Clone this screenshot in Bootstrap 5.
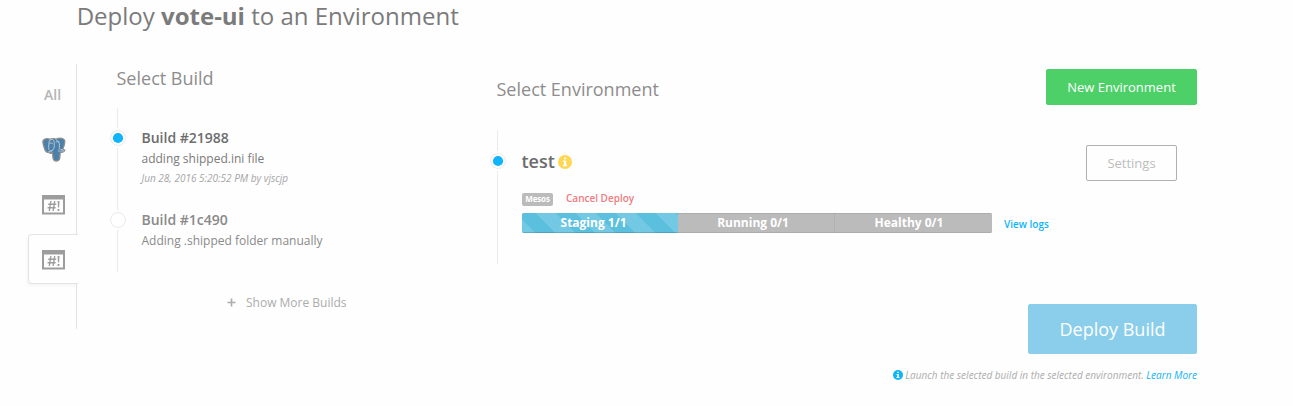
<!DOCTYPE html>
<html lang="en">
<head>
<meta charset="utf-8">
<meta name="viewport" content="width=device-width, initial-scale=1">
<title>Deploy vote-ui</title>
<link href="https://cdn.jsdelivr.net/npm/bootstrap@5.3.0/dist/css/bootstrap.min.css" rel="stylesheet">
<style>
body{font-family:"Open Sans",sans-serif;background:#fefefe;color:#7b7b7b;font-size:12px;line-height:20px;overflow:hidden}
.page{width:1197px;padding-left:28px}
h1{font-size:24px;line-height:32px;margin:0 0 32px 48.7px;color:#7b7b7b;font-weight:400}
h2{font-size:18px;line-height:24px;margin:0 0 0 -.5px;color:#8d8d8d;font-weight:400}
.services{width:49px;height:265px;background:linear-gradient(#e4e4e4,#e4e4e4) right/1px 100% no-repeat}
.service{width:50px;height:55px;padding-left:14px}
.service.all{height:60px;padding:2px 0 0 16px;font-size:14px;font-weight:600;color:#b5b5b5}
.service.current{height:50px;background:#fefefe;border:1px solid #e4e4e4;border-right:0;border-radius:4px 0 0 4px;padding:1px 0 0 13px;box-shadow:-1px 2px 3px rgba(0,0,0,.04)}
.builds{width:380px;margin-left:40px;padding-top:2px}
.envs{width:700px;padding-top:5px}
.timeline{background:linear-gradient(#ebebeb,#ebebeb) 0 0/1px 100% no-repeat}
.stop{padding-left:7px}
.stop-dot{flex:none;width:16px;height:20px;margin-left:-14px;margin-right:15.5px;background:#fefefe}
.stop-dot svg{display:block;margin-top:2px}
.name{font-size:14px;line-height:20px;font-weight:600;color:#6c6c6c}
.note{line-height:22px}
.when{font-size:10px;line-height:16px;font-style:italic;color:#a5a5a5}
.pending,.pending .name{color:#8a8a8a}
.more{margin:21px 0 0 110px;color:#acacac}
.btn{font-size:13px;line-height:20px;border-radius:2px;padding:7px 20px}
.btn-new{background:#4cd067;border-color:#4cd067;color:#fff;width:151px;height:36px;padding-left:0;padding-right:0;font-weight:500}
.btn-settings{border-color:#b0b0b0;color:#bdbdbd;width:91px;height:36px;margin-right:20px;padding-left:0;padding-right:0}
.btn-deploy{background:#8bceec;border-color:#8bceec;color:#fff;width:169px;height:50px;font-size:18px;padding:0}
.env-name{font-size:18px;line-height:24px;font-weight:600;color:#6c6c6c}
.tag{width:31px;height:13px;background:#bbb;color:#fff;font-size:8px;line-height:12px;font-weight:700;border-radius:2px;text-align:center;letter-spacing:-.15px}
.cancel{font-size:10px;line-height:14px;font-weight:600;color:#ee7b7f;margin:-2px 0 0 13px}
.progress{width:470px;height:20px;border-radius:2px;background:#bbb;--bs-progress-font-size:12px}
.progress-bar{font-weight:700;background-color:#bbb;box-shadow:inset 0 -1px 0 rgba(0,0,0,.08),inset 0 1px 0 rgba(0,0,0,.07);padding-right:9px}
.progress-bar.running{padding-right:7px;box-shadow:inset 0 -1px 0 rgba(0,0,0,.08),inset 0 1px 0 rgba(0,0,0,.07),inset -1px 0 0 rgba(0,0,0,.05)}
.progress-bar.staging{padding-right:13px;background-color:#5bc0de;background-size:40px 40px;background-position:14px 0;box-shadow:inset 0 -1px 0 rgba(0,0,0,.15)}
.blue{color:#0fb4fa;text-decoration:none}
.logs{font-size:10px;font-weight:600;line-height:14px}
.hint{font-size:10px;line-height:14px;font-style:italic;color:#acacac;margin-top:14px}
</style>
</head>
<body>
<svg width="0" height="0" class="d-none">
  <symbol id="window" viewBox="0 0 23 20"><path fill="#9d9d9d" fill-rule="evenodd" d="M0 0h23v19.500H0zM2 4.500v13h19v-13z"/><path d="M8.900 6 7.300 16M12.700 6 11.100 16M6.200 9.300h8M5.600 12.700h8" fill="none" stroke="#9d9d9d" stroke-width="1.400"/><path d="M15.600 5.900h1.900l-.4 6.500H16zM15.600 13.900h1.800v2h-1.800z" fill="#9d9d9d"/></symbol>
  <symbol id="info" viewBox="0 0 14 14"><circle cx="7" cy="7" r="7" fill="currentColor"/><path fill="#fff" d="M6 2.400h2.200v1.900H6zM5 5.600h3.200v4.200h.9v1.400H4.900V9.800H6V7H5z"/></symbol>
  <symbol id="dot" viewBox="0 0 16 16"><circle cx="8" cy="8" r="7.400" fill="#fff" stroke="#e9e9e9"/><circle cx="8" cy="8" r="5.100" fill="#0fb4fa"/></symbol>
</svg>
<main class="page">
  <h1>Deploy <strong>vote-ui</strong> to an Environment</h1>
  <div class="d-flex">
    <nav class="services">
      <div class="service all d-flex align-items-center">All</div>
      <div class="service d-flex align-items-center">
        <svg width="24" height="25" viewBox="0 0 24 25" style="margin-top:-5px">
          <path d="M1.200 3.400C2.800 1.300 6 1.400 8.200 2.200 10 1.500 12 1.400 13.800 2c2.600-.9 6.800-1.200 8.500.8 1.300 1.900-.3 6.500-1.600 9.600l2.100.7c-.5 1.500-2.500 2.500-4.600 2.300l-.4 5.400c-.2 2.300-1.700 3.200-3.300 3.200-1.800 0-3.300-1.200-3.500-3.300l-.4-4.900c-1.500.9-3.300.3-4-.4-2.100.4-3.700-2.100-4.400-4.900C1.400 7.800.3 5.100 1.200 3.400z" fill="#4a80aa" stroke="#8f8d8b" stroke-width="1.300"/>
          <path d="M8.200 2.500C6 5.600 7 10.300 6.800 12.700M8.200 3c2.800-1.500 4.400.8 4.100 3.500-.2 3.300.3 4.800-1.800 6.700-.8 1.500-2.500 2.100-4.100 1.500M13.700 2.500c2.500 1 4 3.700 3.700 6.500-.1 2.100-.2 2.600 1.100 3.600h2.200M17.300 5c-.9-.7-2.200-.5-3.500.2M7.600 6.500c1.200-.7 2.300-.5 3.300 0M17 12.500v2.300M7 14l3.500-.4M18.500 14.300l3.500-.6" fill="none" stroke="#b9cad8" stroke-width="1"/>
        </svg>
      </div>
      <div class="service d-flex align-items-center"><svg width="23" height="20" style="margin-bottom:3px"><use href="#window"/></svg></div>
      <div class="service current d-flex align-items-center"><svg width="23" height="20"><use href="#window"/></svg></div>
    </nav>
    <section class="builds">
      <h2>Select Build</h2>
      <div class="timeline" style="margin-top:18px;padding:20px 0">
        <div class="stop d-flex" style="height:82px">
          <div class="stop-dot"><svg width="16" height="16"><use href="#dot"/></svg></div>
          <div><div class="name">Build #21988</div><div class="note">adding shipped.ini file</div><div class="when">Jun 28, 2016 5:20:52 PM by vjscjp</div></div>
        </div>
        <div class="stop d-flex pending">
          <div class="stop-dot"><svg width="16" height="16"><circle cx="8" cy="8" r="7.400" fill="#fff" stroke="#e9e9e9"/></svg></div>
          <div><div class="name">Build #1c490</div><div class="note">Adding .shipped folder manually</div></div>
        </div>
      </div>
      <div class="more d-flex align-items-center"><svg width="9" height="9" style="margin:-2px 10px 0 0"><path d="M4.500.5v8M.5 4.500h8" stroke="#acacac" stroke-width="1.600"/></svg><span>Show More Builds</span></div>
    </section>
    <section class="envs">
      <div class="d-flex justify-content-between">
        <h2 class="pt-2">Select Environment</h2>
        <button class="btn btn-new">New Environment</button>
      </div>
      <div class="timeline" style="margin-top:25px;height:134px;padding-top:15px">
        <div class="stop d-flex align-items-start">
          <div class="stop-dot" style="margin-top:6px"><svg width="16" height="16"><use href="#dot"/></svg></div>
          <div class="env-name flex-grow-1 d-flex align-items-center" style="margin-top:4px">test<svg width="14" height="14" style="color:#ffd753;margin:1px 0 0 3.500px"><use href="#info"/></svg></div>
          <button class="btn btn-settings">Settings</button>
        </div>
        <div style="padding:11px 0 0 25px">
          <div class="d-flex align-items-center" style="height:14px"><span class="tag">Mesos</span><span class="cancel">Cancel Deploy</span></div>
          <div class="d-flex" style="margin-top:7px">
            <div class="progress">
              <div class="progress-bar staging progress-bar-striped" style="width:33.200%">Staging 1/1</div>
              <div class="progress-bar running" style="width:33.400%">Running 0/1</div>
              <div class="progress-bar" style="width:33.400%">Healthy 0/1</div>
            </div>
            <a href="#" class="blue logs" style="margin:4px 0 0 12px">View logs</a>
          </div>
        </div>
      </div>
      <div class="d-flex flex-column align-items-end" style="padding-top:40px">
        <button class="btn btn-deploy">Deploy Build</button>
        <div class="hint d-flex align-items-center"><svg class="blue" width="10" height="10" style="margin-right:2px"><use href="#info"/></svg><span>Launch the selected build in the selected environment. <a href="#" class="blue">Learn More</a></span></div>
      </div>
    </section>
  </div>
</main>
<script src="https://cdn.jsdelivr.net/npm/bootstrap@5.3.0/dist/js/bootstrap.bundle.min.js"></script>
</body>
</html>
